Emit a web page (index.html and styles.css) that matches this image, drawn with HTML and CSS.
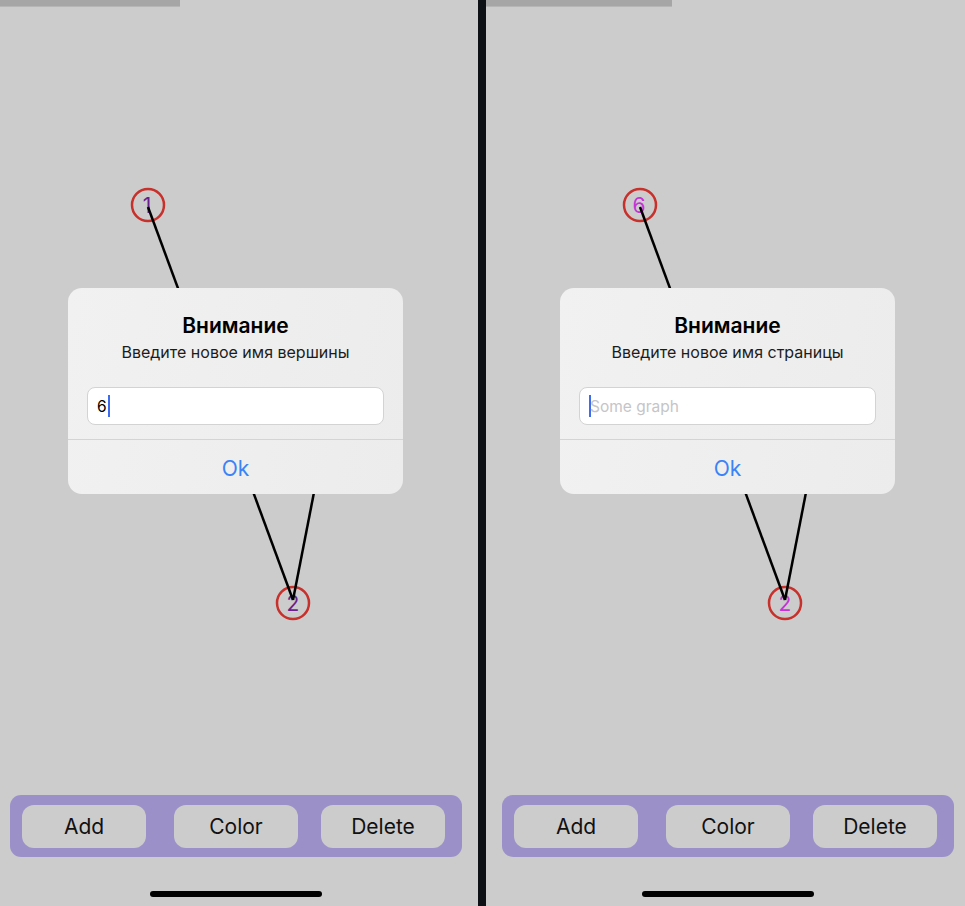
FILE: index.html
```html
<!DOCTYPE html>
<html lang="ru">
<head>
<meta charset="utf-8">
<title>Graph editor</title>
<link rel="stylesheet" href="styles.css">
</head>
<body>
<div class="screens">
  <section class="phone phone-left">
    <div class="status-bar"></div>
    <svg class="graph" width="484" height="906" viewBox="0 0 484 906">
      <circle class="vertex" cx="154" cy="205" r="16"/>
      <circle class="vertex" cx="299" cy="603" r="16"/>
      <text class="label label-dark" x="153" y="205">1</text>
      <text class="label label-dark" x="299" y="603">2</text>
      <line class="edge" x1="154" y1="207" x2="299" y2="600"/>
      <line class="edge" x1="340" y1="390" x2="299" y2="600"/>
    </svg>
    <div class="alert">
      <div class="alert-title">Внимание</div>
      <div class="alert-message">Введите новое имя вершины</div>
      <div class="alert-field"><span class="field-value">6</span><span class="caret"></span></div>
      <div class="alert-sep"></div>
      <div class="alert-action">Ok</div>
    </div>
    <div class="spacer"></div>
    <nav class="toolbar">
      <div class="tool-btn">Add</div>
      <div class="tool-btn tool-color">Color</div>
      <div class="tool-btn tool-delete">Delete</div>
    </nav>
    <div class="home-indicator"></div>
  </section>
  <div class="divider"></div>
  <section class="phone phone-right">
    <div class="status-bar"></div>
    <svg class="graph" width="484" height="906" viewBox="0 0 484 906">
      <circle class="vertex" cx="154" cy="205" r="16"/>
      <circle class="vertex" cx="299" cy="603" r="16"/>
      <text class="label label-bright" x="153" y="205">6</text>
      <text class="label label-bright" x="299" y="603">2</text>
      <line class="edge" x1="154" y1="207" x2="299" y2="600"/>
      <line class="edge" x1="340" y1="390" x2="299" y2="600"/>
    </svg>
    <div class="alert">
      <div class="alert-title">Внимание</div>
      <div class="alert-message">Введите новое имя страницы</div>
      <div class="alert-field"><span class="caret caret-start"></span><span class="field-placeholder">Some graph</span></div>
      <div class="alert-sep"></div>
      <div class="alert-action">Ok</div>
    </div>
    <div class="spacer"></div>
    <nav class="toolbar">
      <div class="tool-btn">Add</div>
      <div class="tool-btn tool-color">Color</div>
      <div class="tool-btn tool-delete">Delete</div>
    </nav>
    <div class="home-indicator"></div>
  </section>
</div>
</body>
</html>
```
FILE: styles.css
```css
html, body {
  margin: 0;
  padding: 0;
  background: #cccccc;
  overflow: hidden;
}

body {
  font-family: "Inter", "Noto Sans", "Liberation Sans", sans-serif;
  width: 965px;
  height: 906px;
}

.screens {
  display: flex;
  width: 965px;
  height: 906px;
  overflow: hidden;
}

.phone {
  position: relative;
  flex: 0 0 484px;
  width: 484px;
  height: 906px;
  background: #cccccc;
  display: flex;
  flex-direction: column;
}

.phone-left {
  margin-left: -6px;
}

.divider {
  flex: 0 0 8px;
  background: #0d1115;
}

.status-bar {
  width: 186px;
  height: 6px;
  background: #a6a6a6;
  border-bottom: 1px solid #b6b6b6;
  flex-shrink: 0;
}

.graph {
  position: absolute;
  left: 0;
  top: 0;
}

.vertex {
  fill: none;
  stroke: #c8302b;
  stroke-width: 2.5;
}

.label {
  font-family: "Inter", "Noto Sans", sans-serif;
  font-size: 21px;
  text-anchor: middle;
  dominant-baseline: central;
}

.label-dark {
  fill: #6b1f8c;
}

.label-bright {
  fill: #c532d6;
}

.edge {
  stroke: #000000;
  stroke-width: 2.5;
}

.alert {
  position: absolute;
  left: 74px;
  top: 288px;
  width: 335px;
  height: 206px;
  border-radius: 14px;
  background: linear-gradient(100deg, #f1f1f1 0%, #eeeeee 60%, #ececec 100%);
  display: flex;
  flex-direction: column;
  align-items: stretch;
  box-sizing: border-box;
  padding-top: 26px;
}

.alert-title {
  text-align: center;
  font-size: 21px;
  font-weight: 600;
  line-height: 24px;
  color: #000000;
}

.alert-message {
  margin-top: 4px;
  text-align: center;
  font-size: 16px;
  line-height: 20px;
  color: #1c1c1c;
}

.alert-field {
  margin: 25px 19px 14px;
  height: 38px;
  box-sizing: border-box;
  border: 1px solid #d3d3d3;
  border-radius: 8px;
  background: #ffffff;
  display: flex;
  align-items: center;
  padding-left: 9px;
  font-size: 15.5px;
  color: #000000;
}

.caret {
  display: inline-block;
  width: 2px;
  height: 22px;
  background: #3d6cf2;
  margin-left: 1px;
}

.caret-start {
  margin-left: 0;
  margin-right: -1px;
}

.field-placeholder {
  color: #c5c5c8;
}

.alert-sep {
  height: 1px;
  background: #d4d4d4;
}

.alert-action {
  flex: 1;
  display: flex;
  align-items: center;
  justify-content: center;
  font-size: 21px;
  color: #3a82f7;
  padding-top: 2px;
}

.spacer {
  flex: 1;
}

.toolbar {
  margin: 0 16px;
  height: 62px;
  border-radius: 11px;
  background: #9c90c9;
  display: flex;
  align-items: center;
  padding-left: 12px;
  flex-shrink: 0;
}

.tool-btn {
  width: 124px;
  height: 43px;
  border-radius: 12px;
  background: #cccccc;
  display: flex;
  align-items: center;
  justify-content: center;
  font-size: 21px;
  color: #111111;
}

.tool-color {
  margin-left: 28px;
}

.tool-delete {
  margin-left: 23px;
}

.home-indicator {
  align-self: center;
  width: 172px;
  height: 6px;
  border-radius: 3px;
  background: #000000;
  margin-top: 34px;
  margin-bottom: 9px;
  flex-shrink: 0;
}
```
